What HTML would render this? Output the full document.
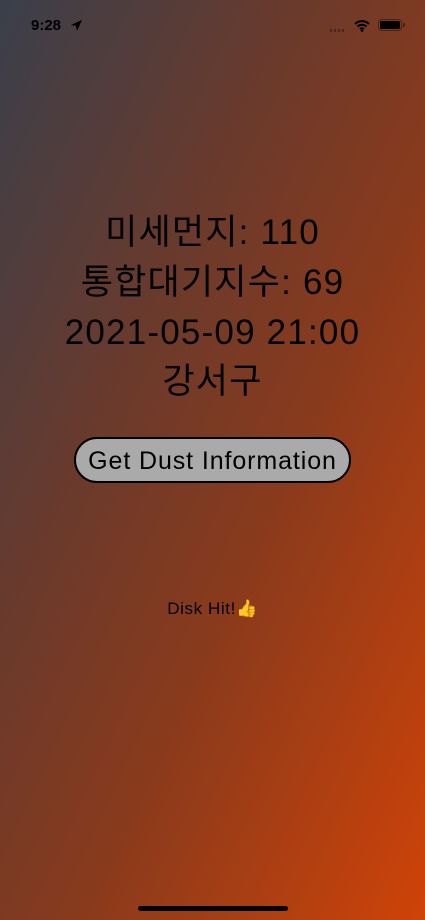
<!DOCTYPE html><html><head><meta charset="utf-8"><style>
html,body{margin:0;padding:0}
body{width:425px;height:920px;overflow:hidden;position:relative;background:linear-gradient(to bottom right,#3a3f4b 0%,#6a3a2c 35%,#8a3a1c 60%,#cf4308 100%);font-family:"Liberation Sans","Noto Sans CJK KR",sans-serif;color:#000}
.l{position:absolute;left:0;width:425px;text-align:center;font-size:35px;line-height:40px;letter-spacing:1.2px}
.btn{position:absolute;left:74px;top:437px;width:273px;height:42px;border:2px solid #000;border-radius:23px;background:#aaa;text-align:center;font-size:25px;line-height:44px;letter-spacing:0.9px}
</style></head><body>
<div style="position:absolute;left:31px;top:17px;font-size:15px;font-weight:bold">9:28</div>
<svg style="position:absolute;left:70px;top:19px" width="13" height="13" viewBox="0 0 13 13"><path d="M12 1L1 6l5 1 1 5z" fill="#000"/></svg>
<div style="position:absolute;left:330px;top:29px;width:16px;height:3px;background:repeating-linear-gradient(90deg,rgba(0,0,0,.35) 0 2px,transparent 2px 4px)"></div>
<svg style="position:absolute;left:354px;top:19px" width="16" height="13" viewBox="0 0 16 13"><path d="M1 5a10 10 0 0 1 14 0M3.5 7.5a6.5 6.5 0 0 1 9 0M6 10a3 3 0 0 1 4 0" stroke="#000" stroke-width="2" fill="none"/><circle cx="8" cy="11.5" r="1.3"/></svg>
<div style="position:absolute;left:378px;top:19px;width:24px;height:12px;border:1px solid rgba(0,0,0,.4);border-radius:4px;box-sizing:border-box;padding:1px"><div style="background:#000;width:100%;height:100%;border-radius:2px"></div></div>
<div style="position:absolute;left:403px;top:23px;width:2px;height:4px;background:rgba(0,0,0,.4)"></div>
<div class="l" style="top:213px">미세먼지: 110</div>
<div class="l" style="top:263px">통합대기지수: 69</div>
<div class="l" style="top:313px">2021-05-09 21:00</div>
<div class="l" style="top:362px">강서구</div>
<div class="btn">Get Dust Information</div>
<div style="position:absolute;left:0;width:425px;top:599px;text-align:center;font-size:17px;line-height:20px;letter-spacing:0.6px">Disk Hit!👍</div>
<div style="position:absolute;left:138px;top:906px;width:150px;height:5px;border-radius:3px;background:#000"></div>
</body></html>
